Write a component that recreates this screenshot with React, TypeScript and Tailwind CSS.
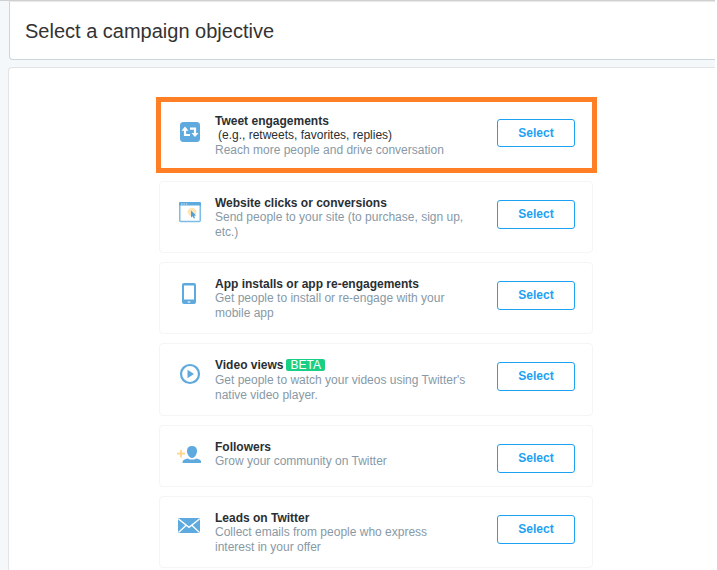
import type { ReactNode } from "react";

type Objective = {
  id: string;
  title: string;
  note?: string;
  description: string;
  badge?: string;
  featured?: boolean;
  icon: ReactNode;
};

const RetweetIcon = () => (
  <svg viewBox="0 0 24 24" className="size-6" aria-hidden="true">
    <rect x="3" y="3" width="20" height="20" rx="3.500" fill="#5ea9dd" />
    <g fill="none" stroke="#fff" strokeWidth="2.200">
      <path d="M8 10v6h5M13 9.700h5v6" />
    </g>
    <path d="M4.500 11.700 8 7.600l3.500 4.100zM14.500 14 18 18.100l3.500-4.100z" fill="#fff" />
  </svg>
);

const BrowserIcon = () => (
  <svg viewBox="0 0 24 24" className="size-6" aria-hidden="true">
    <rect x="2.750" y="3" width="20.500" height="18.500" rx="1" fill="#fff" stroke="#7dbce6" strokeWidth="1.500" />
    <path d="M2 3.200Q2 2 3.200 2h19.600Q24 2 24 3.200V5.500H2z" fill="#5ea9dd" />
    <path d="M4 4h1.300M6.500 4h1.300M9 4h1.300" stroke="#d5eaf7" strokeWidth="1.200" />
    <circle cx="15" cy="12" r="4.300" fill="#ffe4b5" />
    <path d="M14 10.500v7l1.800-1.300 1 2.300 1.300-.6-1-2.200 2.100-.2z" fill="#4fa0d9" />
  </svg>
);

const PhoneIcon = () => (
  <svg viewBox="0 0 24 24" className="size-6" aria-hidden="true">
    <rect x="5" y="2" width="14" height="21" rx="2" fill="#5ea9dd" />
    <path d="M7 4.500h10v14H7z" fill="#fff" />
    <rect x="10.500" y="20.300" width="3" height="1.400" rx=".7" fill="#d5eaf7" />
  </svg>
);

const PlayIcon = () => (
  <svg viewBox="0 0 24 24" className="size-6" aria-hidden="true">
    <circle cx="13" cy="12" r="9" fill="#fff" stroke="#5ea9dd" strokeWidth="2.200" />
    <path d="M10.500 7.800v8.400l6.500-4.200z" fill="#5ea9dd" />
  </svg>
);

const FollowerIcon = () => (
  <svg viewBox="0 0 24 24" className="size-6" aria-hidden="true">
    <path d="M0 9.700h8M4 6v7.500" stroke="#ffd488" strokeWidth="1.800" />
    <path d="M15 2c3.200 0 5 2 5 4.800 0 3-2 7.200-5 7.200s-5-4.200-5-7.200C10 4 11.800 2 15 2z" fill="#5ea9dd" />
    <path d="M5.500 19c0-3 1.500-3.700 5.500-4.600 1.500 1.600 6.500 1.600 8 0 4 .9 5.200 1.600 5.200 4.600z" fill="#5ea9dd" />
  </svg>
);

const MailIcon = () => (
  <svg viewBox="0 0 24 24" className="size-6" aria-hidden="true">
    <rect x="1" y="3" width="22" height="15" rx="1.500" fill="#5ea9dd" />
    <path d="m1.500 4 10.500 8.300L22.500 4M1.500 17.500l7.700-7.300M22.500 17.500l-7.700-7.300" fill="none" stroke="#fff" strokeWidth="1.300" />
  </svg>
);

const objectives: Objective[] = [
  {
    id: "engagements",
    title: "Tweet engagements",
    note: "(e.g., retweets, favorites, replies)",
    description: "Reach more people and drive conversation",
    featured: true,
    icon: <RetweetIcon />,
  },
  {
    id: "website",
    title: "Website clicks or conversions",
    description: "Send people to your site (to purchase, sign up, etc.)",
    icon: <BrowserIcon />,
  },
  {
    id: "app",
    title: "App installs or app re-engagements",
    description: "Get people to install or re-engage with your mobile app",
    icon: <PhoneIcon />,
  },
  {
    id: "video",
    title: "Video views",
    badge: "BETA",
    description: "Get people to watch your videos using Twitter's native video player.",
    icon: <PlayIcon />,
  },
  {
    id: "followers",
    title: "Followers",
    description: "Grow your community on Twitter",
    icon: <FollowerIcon />,
  },
  {
    id: "leads",
    title: "Leads on Twitter",
    description: "Collect emails from people who express interest in your offer",
    icon: <MailIcon />,
  },
];

function ObjectiveCard({ item }: { item: Objective }) {
  const frame = item.featured
    ? "-ml-[3px] -mr-1 -mb-px border-[5px] border-[#ff7f27] pt-3 pb-2.5 pl-4 pr-[17px]"
    : "rounded border border-[#f3f5f7] pt-3.5 pb-3 pl-[17px] pr-[17px]";
  return (
    <li className={`flex items-start bg-white ${frame}`}>
      <div className={`mr-3.5 shrink-0 ${item.featured ? "mt-[5px]" : "mt-1"}`}>{item.icon}</div>
      <div className="mr-[30px] min-w-0 flex-1">
        <h2 id={item.id} className="flex items-start text-[12px] leading-[14px] font-bold text-[#292f33]">
          {item.title}
          {item.badge && (
            <span className="mt-px mb-0.5 ml-[3px] rounded-xs bg-[#19cf86] px-1 leading-[12px] font-normal text-white">
              {item.badge}
            </span>
          )}
        </h2>
        {item.note && <p className="pl-[3px] text-[12px] leading-[15px] text-[#292f33]">{item.note}</p>}
        <p className="text-[12px] leading-[15px] text-[#8899a6]">{item.description}</p>
      </div>
      <button
        type="button"
        aria-describedby={item.id}
        className={`w-[78px] shrink-0 rounded-[3px] border border-[#1da1f2] bg-white text-[12px] font-bold text-[#1da1f2] ${
          item.featured ? "mt-[5px] h-7" : "mt-1 mb-px h-[29px] pb-0.5"
        }`}
      >
        Select
      </button>
    </li>
  );
}

export default function App() {
  return (
    <div className="h-screen overflow-hidden bg-white pr-0.5 font-['Liberation_Sans',Arial,sans-serif]">
      <div className="min-h-full border-t border-[#d0d0d0] bg-[#f5f8fa]">
        <header className="ml-[9px] rounded-bl border-t border-b border-l border-[#ccd6dd] border-t-[#e8e8e8] bg-white pt-[15px] pb-3.5 pl-[15px]">
          <h1 className="text-[20px] leading-[28px] text-[#333]">Select a campaign objective</h1>
        </header>
        <main className="mt-[7px] ml-2 rounded-tl border-t border-l border-[#e1e3e5] bg-white pt-[29px] pb-2 pl-[150px]">
          <ul className="flex max-w-[434px] flex-col gap-[9px]">
            {objectives.map((item) => (
              <ObjectiveCard key={item.id} item={item} />
            ))}
          </ul>
        </main>
      </div>
    </div>
  );
}
